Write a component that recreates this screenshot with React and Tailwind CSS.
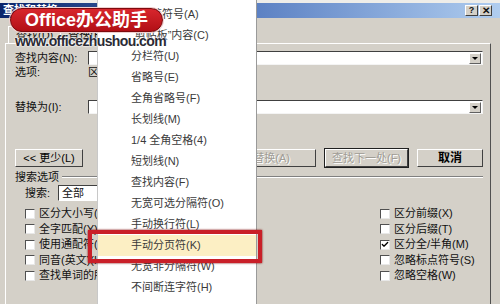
import { Check } from 'lucide-react'

const MENU_ITEMS = [
  '¶ 段落符号(A)',
  '“剪贴板”内容(C)',
  '分栏符(U)',
  '省略号(E)',
  '全角省略号(F)',
  '长划线(M)',
  '1/4 全角空格(4)',
  '短划线(N)',
  '查找内容(F)',
  '无宽可选分隔符(O)',
  '手动换行符(L)',
  '手动分页符(K)',
  '无宽非分隔符(W)',
  '不间断连字符(H)',
]

const LEFT_OPTS = [
  ['区分大小写(H)', false],
  ['全字匹配(Y)', false],
  ['使用通配符(U)', false],
  ['同音(英文)(K)', false],
  ['查找单词的所有形式(英文)(W)', false],
]

const RIGHT_OPTS = [
  ['区分前缀(X)', false],
  ['区分后缀(T)', false],
  ['区分全/半角(M)', true],
  ['忽略标点符号(S)', false],
  ['忽略空格(W)', false],
]

function Combo() {
  return (
    <div className="flex-1 h-[14px] flex justify-end items-center bg-white border border-t-[#404040] border-l-[#404040] border-r-[#f4f4f4] border-b-[#f4f4f4] pr-px">
      <div className="w-[12px] h-[11px] flex items-center justify-center bg-[#d4d0c8] border border-t-white border-l-white border-r-[#606060] border-b-[#606060]">
        <div className="w-0 h-0 border-l-[3px] border-r-[3px] border-t-[3px] border-l-transparent border-r-transparent border-t-black" />
      </div>
    </div>
  )
}

function Button({ children, className = '', disabled, isDefault }) {
  return (
    <div
      className={`h-[18px] flex items-center whitespace-nowrap bg-[#d4d0c8] border border-t-white border-l-white border-r-[#404040] border-b-[#404040] ${isDefault ? 'outline outline-1 outline-[#202020]' : ''} ${disabled ? 'text-[#a09d96] [text-shadow:1px_1px_0_#fff]' : 'text-black'} ${className}`}
    >
      {children}
    </div>
  )
}

function CheckBox({ label, checked }) {
  return (
    <div className="h-[15.5px] flex items-center gap-[4px] whitespace-nowrap">
      <div className="w-[10px] h-[10px] shrink-0 bg-white border border-t-[#505050] border-l-[#505050] border-r-[#e8e8e8] border-b-[#e8e8e8] flex items-center justify-center">
        {checked && <Check size={9} strokeWidth={4} className="text-black" />}
      </div>
      <span>{label}</span>
    </div>
  )
}

export default function App() {
  return (
    <div className="relative w-[500px] h-[304px] overflow-hidden bg-[#d4d0c8] text-[11px] leading-none text-[#111] font-['Liberation_Sans','Noto_Sans_CJK_SC',sans-serif]">
      <div className="h-[3px] bg-[#eeede9]" />

      {/* title bar */}
      <div className="h-[15px] flex items-center justify-between pl-[3px] pr-[8px] bg-gradient-to-r from-[#0a246a] via-[#5a7fc2] to-[#b0cdef]">
        <span className="text-white font-bold text-[11px]">查找和替换</span>
        <div className="flex gap-[1px]">
          <div className="w-[13px] h-[11px] flex items-center justify-center bg-[#d4d0c8] border border-t-white border-l-white border-r-[#404040] border-b-[#404040] font-bold text-[9px]">?</div>
          <div className="w-[13px] h-[11px] flex items-center justify-center bg-[#d4d0c8] border border-t-white border-l-white border-r-[#404040] border-b-[#404040] font-bold text-[10px]">✕</div>
        </div>
      </div>

      {/* tabs */}
      <div className="h-[25px] flex items-end pl-[8px]">
        <div className="h-[17px] px-[7px] flex items-center border-t border-l border-white">查找(D)</div>
        <div className="h-[19px] px-[7px] flex items-center border-t border-l border-r border-t-white border-l-white border-r-[#404040]">替换(P)</div>
        <div className="h-[17px] px-[7px] flex items-center border-t border-r border-t-white border-r-[#404040]">定位(G)</div>
      </div>

      {/* tab panel */}
      <div className="ml-[5px] mr-[9px] h-[270px] border-t border-l border-r border-t-white border-l-white border-r-[#505050] pl-[9px] pr-[7px] pt-[7px]">
        <div className="flex items-center h-[14px]">
          <span className="w-[73px] shrink-0">查找内容(N):</span>
          <Combo />
        </div>
        <div className="flex items-center h-[12px] mt-[1px]">
          <span className="w-[73px] shrink-0">选项:</span>
          <span>区分全/半角</span>
        </div>
        <div className="flex items-center h-[14px] mt-[22px]">
          <span className="w-[73px] shrink-0">替换为(I):</span>
          <Combo />
        </div>

        <div className="flex items-center mt-[35px]">
          <Button className="w-[68px] justify-center">&lt;&lt; 更少(L)</Button>
          <div className="ml-auto flex gap-[9px]">
            <Button className="w-[66px] justify-center" disabled>替换(R)</Button>
            <Button className="w-[100px] justify-end pr-[25px]" disabled>全部替换(A)</Button>
            <Button className="w-[83px] justify-center" disabled isDefault>查找下一处(F)</Button>
            <Button className="w-[66px] justify-center">
              <span className="text-[12px] font-bold">取消</span>
            </Button>
          </div>
        </div>

        <div className="flex items-center h-[12px] mt-[4px] gap-[3px]">
          <span>搜索选项</span>
          <div className="flex-1 flex flex-col">
            <div className="h-px bg-[#808080]" />
            <div className="h-px bg-white" />
          </div>
        </div>

        <div className="flex items-center h-[16px] mt-[2px] pl-[10px]">
          <span className="w-[33px]">搜索:</span>
          <div className="w-[110px] h-[16px] flex items-center pl-[3px] bg-white border border-t-[#404040] border-l-[#404040] border-r-white border-b-white">
            全部
          </div>
        </div>

        <div className="flex mt-[5px] pl-[10px]">
          <div className="w-[355px] flex flex-col">
            {LEFT_OPTS.map(([label, checked]) => (
              <CheckBox key={label} label={label} checked={checked} />
            ))}
          </div>
          <div className="flex flex-col">
            {RIGHT_OPTS.map(([label, checked]) => (
              <CheckBox key={label} label={label} checked={checked} />
            ))}
          </div>
        </div>
      </div>

      {/* special characters menu */}
      <div className="absolute left-[97px] top-0 bottom-0 w-[160px] bg-white border-l border-r border-l-[#c8c8c8] border-r-[#9a9a9a] pt-[4px] text-[#3a3a3a]">
        {MENU_ITEMS.map((item, i) => (
          <div
            key={item}
            className={`h-[21px] flex items-center pl-[33px] whitespace-nowrap ${i === 11 ? 'bg-[#fcefc4]' : ''}`}
          >
            {item}
          </div>
        ))}
      </div>

      {/* annotation box */}
      <div className="absolute left-[88px] top-[230px] w-[174px] h-[33px] border-[4px] border-[#c91f28] shadow-[0_0_2px_#7a0000]" />

      {/* watermark */}
      <div className="absolute left-[10px] top-[8px] w-[153px] h-[24px] rounded-full bg-gradient-to-b from-[#d8262d] to-[#b20f16] border border-[#7d0a0e] shadow-[0_0_0_1px_#f0d0d0] flex items-center justify-center">
        <span className="text-white font-bold text-[18px] leading-none">Office办公助手</span>
      </div>
      <div className="absolute left-[15px] top-[34px] text-[14px] font-bold tracking-[-0.6px] text-[#2b2b35] leading-none [text-shadow:0_0_2px_#fff,0_0_2px_#fff,0_0_1px_#fff]">
        www.officezhushou.com
      </div>
    </div>
  )
}
